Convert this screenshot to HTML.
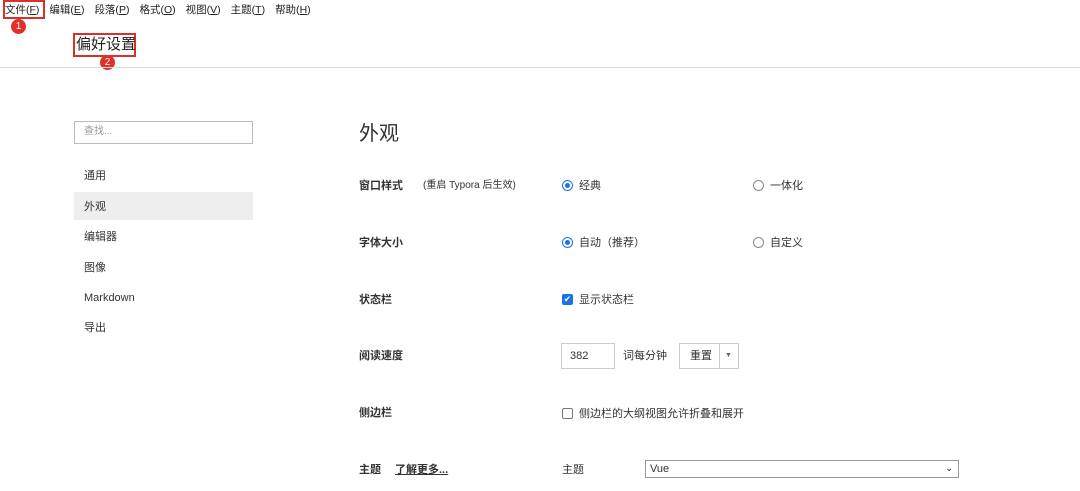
<!DOCTYPE html>
<html><head><meta charset="utf-8"><style>
*{margin:0;padding:0;box-sizing:border-box}
body{width:1080px;height:491px;background:#fff;font-family:"Liberation Sans","Noto Sans CJK SC",sans-serif;color:#333;position:relative;overflow:hidden;font-size:11px;line-height:18px}
.a{position:absolute;white-space:nowrap}
.menu span{margin-right:10px;font-size:10.5px;color:#222}
.lbl{font-weight:bold;color:#333;font-size:11px}
.radio{width:11px;height:11px;border-radius:50%;border:1px solid #888;background:#fff}
.radio.on{border-color:#1a73e8}
.radio.on::after{content:"";position:absolute;left:2px;top:2px;width:5px;height:5px;border-radius:50%;background:#1a73e8}
.circ{width:15px;height:15px;border-radius:50%;background:#e0302a;color:#fff;font-size:10px;text-align:center;line-height:15px}
</style></head><body>
<div class="a menu" style="left:5px;top:1px"><span>文件(<u>F</u>)</span><span>编辑(<u>E</u>)</span><span>段落(<u>P</u>)</span><span>格式(<u>O</u>)</span><span>视图(<u>V</u>)</span><span>主题(<u>T</u>)</span><span>帮助(<u>H</u>)</span></div>
<div class="a" style="left:3px;top:0;width:42px;height:19px;border:2px solid #d9302a"></div>
<div class="a circ" style="left:11px;top:19px">1</div>
<div class="a" style="left:73px;top:33px;width:63px;height:24px;border:2px solid #d9302a"></div>
<div class="a" style="left:76px;top:35px;font-size:15px;line-height:20px;color:#222">偏好设置</div>
<div class="a circ" style="left:100px;top:55px">2</div>
<div class="a" style="left:0;top:67px;width:1080px;height:1px;background:#ddd;box-shadow:0 1px 3px rgba(0,0,0,.08)"></div>

<div class="a" style="left:74px;top:121px;width:179px;height:23px;border:1px solid #bbb"></div>
<div class="a" style="left:84px;top:123px;color:#999;font-size:10px">查找...</div>
<div class="a" style="left:74px;top:192px;width:179px;height:28px;background:#eee"></div>
<div class="a" style="left:84px;top:167px">通用</div>
<div class="a" style="left:84px;top:198px">外观</div>
<div class="a" style="left:84px;top:228px">编辑器</div>
<div class="a" style="left:84px;top:259px">图像</div>
<div class="a" style="left:84px;top:289px">Markdown</div>
<div class="a" style="left:84px;top:319px">导出</div>

<div class="a" style="left:359px;top:121px;font-size:20px;line-height:26px;color:#333">外观</div>
<div class="a lbl" style="left:359px;top:177px">窗口样式</div>
<div class="a" style="left:423px;top:177px;font-size:10px">(重启 Typora 后生效)</div>
<div class="a radio on" style="left:562px;top:180px"></div><div class="a" style="left:579px;top:177px">经典</div>
<div class="a radio" style="left:753px;top:180px"></div><div class="a" style="left:770px;top:177px">一体化</div>

<div class="a lbl" style="left:359px;top:234px">字体大小</div>
<div class="a radio on" style="left:562px;top:237px"></div><div class="a" style="left:579px;top:234px">自动（推荐）</div>
<div class="a radio" style="left:753px;top:237px"></div><div class="a" style="left:770px;top:234px">自定义</div>

<div class="a lbl" style="left:359px;top:291px">状态栏</div>
<div class="a" style="left:562px;top:294px;width:11px;height:11px;background:#1a73e8;border-radius:2px;color:#fff;font-size:9px;line-height:11px;text-align:center">✔</div>
<div class="a" style="left:579px;top:291px">显示状态栏</div>

<div class="a lbl" style="left:359px;top:347px">阅读速度</div>
<div class="a" style="left:561px;top:343px;width:54px;height:26px;border:1px solid #ccc"></div>
<div class="a" style="left:570px;top:347px">382</div>
<div class="a" style="left:623px;top:347px">词每分钟</div>
<div class="a" style="left:679px;top:343px;width:60px;height:26px;border:1px solid #ccc"></div>
<div class="a" style="left:719px;top:343px;width:1px;height:26px;background:#ccc"></div>
<div class="a" style="left:690px;top:347px">重置</div>
<div class="a" style="left:725px;top:347px;font-size:7px;color:#666">▼</div>

<div class="a lbl" style="left:359px;top:404px">侧边栏</div>
<div class="a" style="left:562px;top:408px;width:11px;height:11px;border:1px solid #777;border-radius:2px"></div>
<div class="a" style="left:579px;top:405px">侧边栏的大纲视图允许折叠和展开</div>

<div class="a lbl" style="left:359px;top:461px">主题</div>
<div class="a lbl" style="left:395px;top:461px;text-decoration:underline">了解更多...</div>
<div class="a" style="left:562px;top:461px">主题</div>
<div class="a" style="left:645px;top:460px;width:314px;height:18px;border:1px solid #999"></div>
<div class="a" style="left:650px;top:460px">Vue</div>
<div class="a" style="left:945px;top:460px;font-size:10px;color:#333">⌄</div>
</body></html>
